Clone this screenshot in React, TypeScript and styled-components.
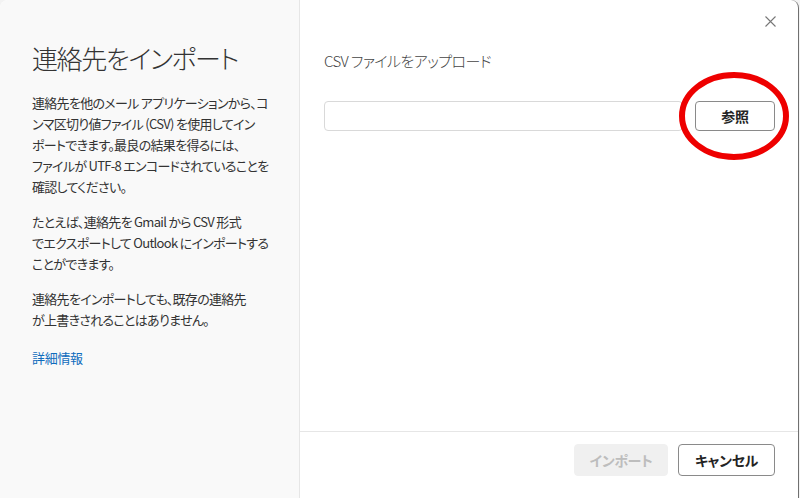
import React from "react";
import styled, { createGlobalStyle } from "styled-components";

const Global = createGlobalStyle`
  html, body { margin: 0; padding: 0; background: #f3f3f3; }
  body {
    font-family: "Noto Sans CJK JP", "Noto Sans", sans-serif;
    font-feature-settings: "palt";
    color: #242424;
  }
  * { box-sizing: border-box; }
`;

const Page = styled.div`
  width: 800px;
  height: 498px;
  display: flex;
  overflow: hidden;
`;

const Dialog = styled.div`
  width: 799px;
  height: 498px;
  display: flex;
  background: #fff;
  border-right: 1px solid #707070;
  border-radius: 8px 8px 0 0;
  overflow: hidden;
  position: relative;
`;

const Side = styled.aside`
  width: 300px;
  flex: none;
  background: #f9f9f9;
  border-right: 1px solid #e6e6e6;
  padding: 40px 0 0 32px;
`;

const Title = styled.h1`
  margin: 0 0 16px;
  font-size: 26px;
  font-weight: 300;
  line-height: 36px;
  letter-spacing: -1.4px;
  color: #333;
  white-space: nowrap;
`;

const Para = styled.p`
  margin: 0 0 14px;
  font-size: 13px;
  line-height: 21px;
  letter-spacing: -0.7px;
  color: #333;
  white-space: nowrap;
`;

const Link = styled.a`
  display: inline-block;
  font-size: 13px;
  line-height: 21px;
  letter-spacing: -0.3px;
  color: #0f6cbd;
  text-decoration: none;
`;

const Main = styled.section`
  flex: 1;
  display: flex;
  flex-direction: column;
  position: relative;
`;

const Content = styled.div`
  flex: 1;
  padding: 47px 23px 0 24px;
`;

const Heading = styled.h2`
  margin: 0 0 26px;
  font-size: 15px;
  font-weight: 300;
  line-height: 28px;
  letter-spacing: -0.6px;
  color: #444;
`;

const Row = styled.div`
  display: flex;
  gap: 12px;
  align-items: center;
`;

const Input = styled.div`
  flex: 1;
  height: 30px;
  border: 1px solid #d9d9d9;
  border-radius: 4px;
  background: #fff;
`;

const Button = styled.button<{ $disabled?: boolean; $w: number; $h: number }>`
  width: ${(p) => p.$w}px;
  height: ${(p) => p.$h}px;
  border-radius: 4px;
  font-family: inherit;
  font-feature-settings: "palt";
  font-size: 14px;
  font-weight: 600;
  letter-spacing: -0.3px;
  padding: 0;
  cursor: pointer;
  border: 1px solid ${(p) => (p.$disabled ? "#f0f0f0" : "#8a8a8a")};
  background: ${(p) => (p.$disabled ? "#f0f0f0" : "#fff")};
  color: ${(p) => (p.$disabled ? "#bdbdbd" : "#242424")};
`;

const Footer = styled.footer`
  height: 67px;
  flex: none;
  border-top: 1px solid #e6e6e6;
  display: flex;
  justify-content: flex-end;
  align-items: flex-start;
  gap: 10px;
  padding: 12px 23px 0 0;
`;

const Close = styled.button`
  position: absolute;
  top: 14px;
  right: 21px;
  width: 14px;
  height: 14px;
  padding: 0;
  border: none;
  background: transparent;
  display: flex;
  align-items: center;
  justify-content: center;
`;

const Annotation = styled.svg`
  position: absolute;
  left: 0;
  top: 0;
  pointer-events: none;
`;

export default function App() {
  return (
    <>
      <Global />
      <Page>
        <Dialog>
          <Side>
            <Title>連絡先をインポート</Title>
            <Para>
              連絡先を他のメール アプリケーションから、コ<br />
              ンマ区切り値ファイル (CSV) を使用してイン<br />
              ポートできます。最良の結果を得るには、<br />
              ファイルが UTF-8 エンコードされていることを<br />
              確認してください。
            </Para>
            <Para>
              たとえば、連絡先を Gmail から CSV 形式<br />
              でエクスポートして Outlook にインポートする<br />
              ことができます。
            </Para>
            <Para>
              連絡先をインポートしても、既存の連絡先<br />
              が上書きされることはありません。
            </Para>
            <Link href="#">詳細情報</Link>
          </Side>
          <Main>
            <Close aria-label="閉じる">
              <svg width="11" height="11" viewBox="0 0 11 11">
                <path d="M0.5 0.5 L10.5 10.5 M10.5 0.5 L0.5 10.5" stroke="#777" strokeWidth="1.1" fill="none" />
              </svg>
            </Close>
            <Content>
              <Heading>CSV ファイルをアップロード</Heading>
              <Row>
                <Input />
                <Button $w={80} $h={30}>参照</Button>
              </Row>
            </Content>
            <Footer>
              <Button $disabled $w={94} $h={32}>インポート</Button>
              <Button $w={97} $h={32}>キャンセル</Button>
            </Footer>
          </Main>
          <Annotation width="800" height="498" viewBox="0 0 800 498">
            <ellipse cx="734" cy="116" rx="52" ry="41" fill="none" stroke="#ee0000" strokeWidth="6" />
          </Annotation>
        </Dialog>
      </Page>
    </>
  );
}
